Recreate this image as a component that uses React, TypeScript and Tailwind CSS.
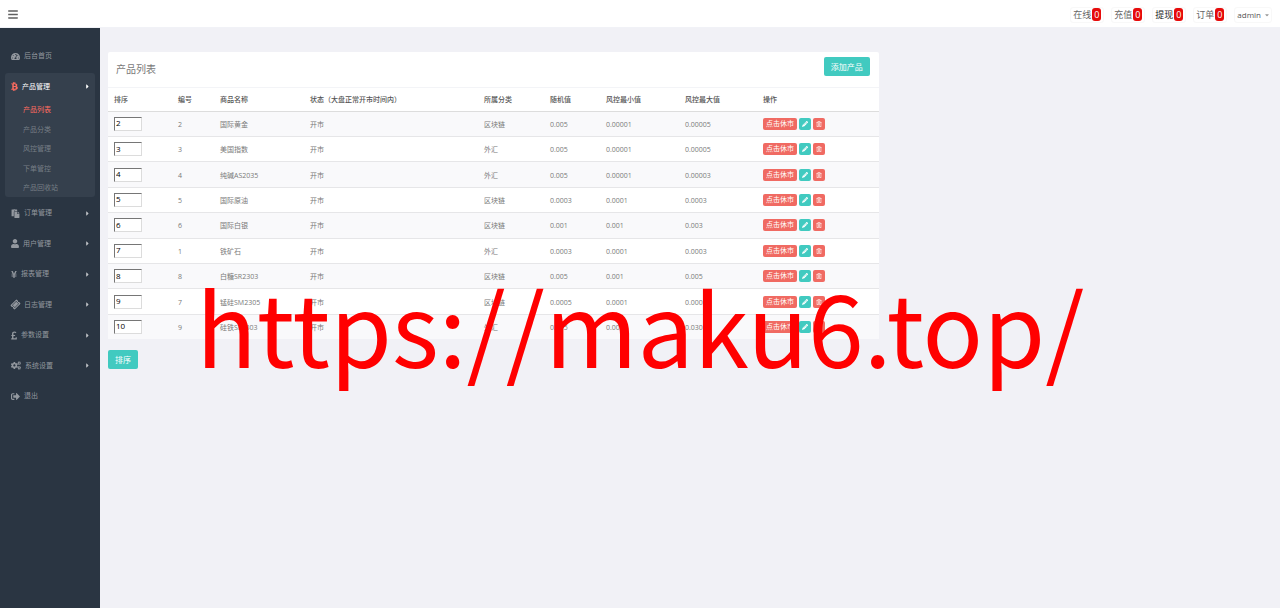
import { useState } from "react";
import type { IconType } from "react-icons";
import {
  FaBars,
  FaBtc,
  FaCaretDown,
  FaCaretRight,
  FaCogs,
  FaPaste,
  FaPencilAlt,
  FaPoundSign,
  FaRegTrashAlt,
  FaSignOutAlt,
  FaTachometerAlt,
  FaTicketAlt,
  FaUser,
  FaYenSign,
} from "react-icons/fa";

type NavItem = {
  label: string;
  icon: IconType;
  iconClass: string;
  children?: string[];
  arrow?: boolean;
};

const navItems: NavItem[] = [
  { label: "后台首页", icon: FaTachometerAlt, iconClass: "w-[9px]" },
  {
    label: "产品管理",
    icon: FaBtc,
    iconClass: "w-[7px] text-[#ff6c60]",
    arrow: true,
    children: ["产品列表", "产品分类", "风控管理", "下单管控", "产品回收站"],
  },
  { label: "订单管理", icon: FaPaste, iconClass: "w-[9px]", arrow: true },
  { label: "用户管理", icon: FaUser, iconClass: "w-[8px]", arrow: true },
  { label: "报表管理", icon: FaYenSign, iconClass: "w-[6px]", arrow: true },
  { label: "日志管理", icon: FaTicketAlt, iconClass: "w-[9px] -rotate-45", arrow: true },
  { label: "参数设置", icon: FaPoundSign, iconClass: "w-[6px]", arrow: true },
  { label: "系统设置", icon: FaCogs, iconClass: "w-[10px]", arrow: true },
  { label: "退出", icon: FaSignOutAlt, iconClass: "w-[9px]" },
];

const counters = [
  { label: "在线", count: 0 },
  { label: "充值", count: 0 },
  { label: "提现", count: 0, active: true },
  { label: "订单", count: 0 },
];

const products = [
  { sort: "2", id: 2, name: "国际黄金", type: "区块链", rand: "0.005", min: "0.00001", max: "0.00005" },
  { sort: "3", id: 3, name: "美国指数", type: "外汇", rand: "0.005", min: "0.00001", max: "0.00005" },
  { sort: "4", id: 4, name: "纯碱AS2035", type: "外汇", rand: "0.005", min: "0.00001", max: "0.00003" },
  { sort: "5", id: 5, name: "国际原油", type: "区块链", rand: "0.0003", min: "0.0001", max: "0.0003" },
  { sort: "6", id: 6, name: "国际白银", type: "区块链", rand: "0.001", min: "0.001", max: "0.003" },
  { sort: "7", id: 1, name: "铁矿石", type: "外汇", rand: "0.0003", min: "0.0001", max: "0.0003" },
  { sort: "8", id: 8, name: "白糖SR2303", type: "区块链", rand: "0.005", min: "0.001", max: "0.005" },
  { sort: "9", id: 7, name: "锰硅SM2305", type: "区块链", rand: "0.0005", min: "0.0001", max: "0.0005" },
  { sort: "10", id: 9, name: "硅铁SF2303", type: "外汇", rand: "0.005", min: "0.001", max: "0.030" },
];

const columns = [
  { title: "排序", width: "w-[64px]" },
  { title: "编号", width: "w-[42px]" },
  { title: "商品名称", width: "w-[90px]" },
  { title: "状态（大盘正常开市时间内）", width: "w-[174px]" },
  { title: "所属分类", width: "w-[66px]" },
  { title: "随机值", width: "w-[56px]" },
  { title: "风控最小值", width: "w-[79px]" },
  { title: "风控最大值", width: "w-[78px]" },
  { title: "操作", width: "w-auto" },
];

function Sidebar() {
  return (
    <aside className="w-[100px] shrink-0 bg-[#2a3542] px-[5px] pt-[14px]">
      <nav>
        <ul className="flex h-[368px] flex-col justify-between">
          {navItems.map(({ label, icon: Icon, iconClass, children, arrow }) => (
            <li key={label} className={children ? "h-[124px] rounded-[3px] bg-[#35404d]" : ""}>
              <a
                href="#"
                className={`flex h-[28px] items-center gap-[4px] px-[6px] ${children ? "text-white" : "text-[#aeb2b7]/80"}`}
              >
                <Icon className={`h-[9px] ${iconClass}`} />
                <span>{label}</span>
                {arrow && (
                  <FaCaretRight className={`ml-auto h-[7px] w-[3px] ${children ? "text-white" : "text-white/70"}`} />
                )}
              </a>
              {children && (
                <ul className="flex h-[97px] flex-col justify-between">
                  {children.map((child, i) => (
                    <li key={child}>
                      <a
                        href="#"
                        className={`flex h-[19px] items-center pl-[18px] ${i === 0 ? "text-[#ff6c60]" : "text-[#aeb2b7]/55"}`}
                      >
                        {child}
                      </a>
                    </li>
                  ))}
                </ul>
              )}
            </li>
          ))}
        </ul>
      </nav>
    </aside>
  );
}

export default function App() {
  const [rows, setRows] = useState(products);

  const changeSort = (index: number, value: string) =>
    setRows(rows.map((row, i) => (i === index ? { ...row, sort: value } : row)));

  return (
    <div className="relative flex min-h-screen flex-col overflow-hidden bg-[#f1f1f6] font-['Open_Sans','Noto_Sans_CJK_SC',sans-serif] text-[7px] leading-[10px] text-[#797979]">
      {/* Topbar */}
      <header className="flex h-[28px] items-center justify-between border-b border-[#f1f2f7] bg-white px-[8px] pt-[2px]">
        <button aria-label="菜单" className="text-[#5f5f5f]">
          <FaBars className="h-[11px] w-[10px]" />
        </button>
        <ul className="flex items-center gap-[7px] text-[9px] leading-[14px]">
          {counters.map((c) => (
            <li key={c.label}>
              <a
                href="#"
                className={`flex items-center gap-px rounded-[3px] border border-[#f8f8f8] px-[2px] ${c.active ? "text-[#222]" : "text-[#666]"}`}
              >
                {c.label}
                <span className="flex h-[13px] w-[9px] items-center justify-center rounded-[3px] bg-[#e60b0b] text-white">
                  {c.count}
                </span>
              </a>
            </li>
          ))}
          <li>
            <button className="flex items-center gap-[4px] rounded-[3px] border border-[#f8f8f8] px-[2px] text-[8px] text-[#555]">
              admin
              <FaCaretDown className="h-[6px] w-[4px] text-[#999]" />
            </button>
          </li>
        </ul>
      </header>

      <div className="flex flex-1">
        <Sidebar />

        {/* Product list */}
        <main className="min-w-0 flex-1 pt-[24px]">
          <div className="w-2/3 px-2">
            <section className="rounded-[2px] bg-white">
              <div className="flex h-[36px] items-start justify-between border-b border-[#f3f4f7] pt-[5px] pr-[9px] pl-[8px]">
                <h1 className="pt-[4px] text-[10px] leading-[16px]">产品列表</h1>
                <button className="h-[19px] rounded-[2px] bg-[#41cac0] px-[7px] text-[8px] text-white">
                  添加产品
                </button>
              </div>
              <table className="h-[251px] w-full table-fixed border-collapse text-left">
                <thead>
                  <tr className="h-[23px]">
                    {columns.map((col) => (
                      <th key={col.title} className={`${col.width} px-[6px] pt-[2px] pb-0 font-medium whitespace-nowrap text-[#555]`}>
                        {col.title}
                      </th>
                    ))}
                  </tr>
                </thead>
                <tbody>
                  {rows.map((row, i) => (
                    <tr key={row.id} className="border-t border-[#e6e6e8] odd:bg-[#f9f9fb] first:border-[#dddddd]">
                      <td className="px-[6px] py-0">
                        <input
                          aria-label={`排序 ${row.name}`}
                          value={row.sort}
                          onChange={(e) => changeSort(i, e.target.value)}
                          className="block h-[14px] w-[28px] border border-t-[#767676] border-r-[#dcdcdc] border-b-[#dcdcdc] border-l-[#767676] bg-white px-px pt-0 pb-[2px] text-[8px] text-black"
                        />
                      </td>
                      <td className="px-[6px] pt-[2px] pb-0">{row.id}</td>
                      <td className="px-[6px] pt-[2px] pb-0">{row.name}</td>
                      <td className="px-[6px] pt-[2px] pb-0">开市</td>
                      <td className="px-[6px] pt-[2px] pb-0">{row.type}</td>
                      <td className="px-[6px] pt-[2px] pb-0">{row.rand}</td>
                      <td className="px-[6px] pt-[2px] pb-0">{row.min}</td>
                      <td className="px-[6px] pt-[2px] pb-0">{row.max}</td>
                      <td className="px-[6px] py-0">
                        <div className="flex gap-[2px] text-white">
                          <button className="h-[12px] rounded-[2px] bg-[#f06a62] px-[3px]">点击休市</button>
                          <button
                            aria-label="编辑"
                            className="flex h-[12px] w-[12px] items-center justify-center rounded-[2px] bg-[#41cac0]"
                          >
                            <FaPencilAlt className="h-[6px] w-[6px]" />
                          </button>
                          <button
                            aria-label="删除"
                            className="flex h-[12px] w-[12px] items-center justify-center rounded-[2px] bg-[#f06a62]"
                          >
                            <FaRegTrashAlt className="h-[6px] w-[6px]" />
                          </button>
                        </div>
                      </td>
                    </tr>
                  ))}
                </tbody>
              </table>
            </section>
            <button className="mt-[11px] h-[19px] rounded-[2px] bg-[#41cac0] px-[7px] text-[8px] text-white">
              排序
            </button>
          </div>
        </main>
      </div>

      {/* Watermark */}
      <p className="pointer-events-none absolute top-[275px] left-[196px] font-['Noto_Sans_CJK_SC',sans-serif] text-[100px] leading-[100px] whitespace-nowrap text-[#ff0000]">
        https://maku6.top/
      </p>
    </div>
  );
}
